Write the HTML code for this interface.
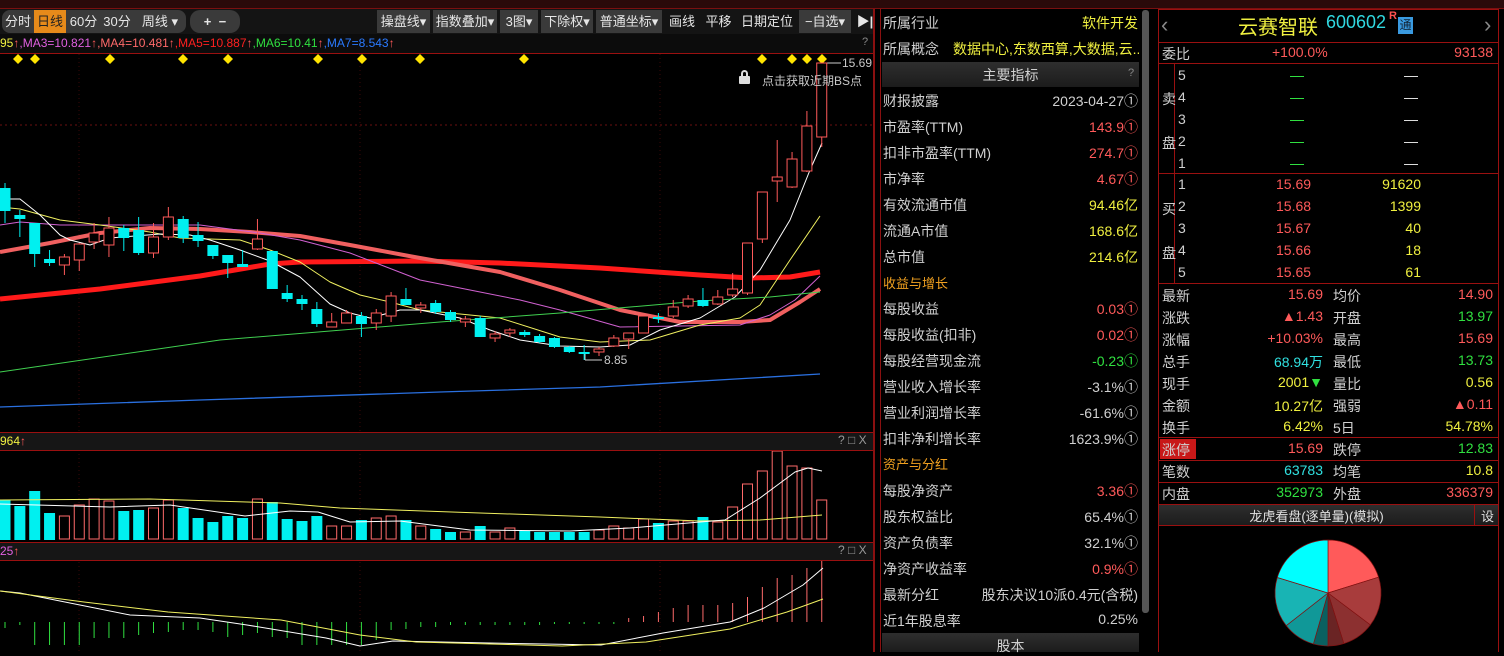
<!DOCTYPE html>
<html><head><meta charset="utf-8">
<style>
*{margin:0;padding:0;box-sizing:border-box}
body{width:1504px;height:652px;background:#000;overflow:hidden;position:relative;font-family:"Liberation Sans","Noto Sans CJK SC",sans-serif;color:#c8c8c8}
.a{position:absolute;white-space:nowrap}
.tb{position:absolute;top:10px;height:23px;line-height:23px;font-size:13px;color:#e6e6e6;text-align:center}
.g{background:#3a3a3a}
.ml{left:883px;font-size:14px;color:#d0d0d0}
.mv{right:366px;font-size:14px;text-align:right}
.rl{left:1162px;font-size:14px;color:#d0d0d0}
.r1{right:181px;font-size:14px;text-align:right}
.l2{left:1333px;font-size:14px;color:#d0d0d0}
.r2{right:11px;font-size:14px;text-align:right}
.red{color:#ff5a5a}.yel{color:#f0f040}.grn{color:#30e040}.cyn{color:#30e0e0}.wht{color:#d0d0d0}
.hl{position:absolute;height:1px;background:#9a1010}
</style></head><body>
<div class="a" style="left:0;top:0;width:1504px;height:8px;background:#2a0a0a"></div>
<div class="hl" style="left:0;top:8px;width:1504px;background:#7a1010"></div>
<!-- toolbar -->
<div class="a" style="left:0;top:9px;width:874px;height:25px;background:#141414"></div>
<div class="tb g" style="left:2px;width:184px;border-radius:8px"></div>
<div class="tb" style="left:3px;width:30px">分时</div>
<div class="tb" style="left:34px;width:32px;background:#e68a1a;color:#222">日线</div>
<div class="tb" style="left:68px;width:31px">60分</div>
<div class="tb" style="left:101px;width:32px">30分</div>
<div class="tb" style="left:135px;width:50px">周线 ▾</div>
<div class="tb g" style="left:190px;width:50px;border-radius:10px;font-weight:bold">+&nbsp;&nbsp;−</div>
<div class="tb g" style="left:377px;width:53px">操盘线▾</div>
<div class="tb g" style="left:433px;width:64px">指数叠加▾</div>
<div class="tb g" style="left:500px;width:38px">3图▾</div>
<div class="tb g" style="left:541px;width:52px">下除权▾</div>
<div class="tb g" style="left:596px;width:66px">普通坐标▾</div>
<div class="tb" style="left:666px;width:32px">画线</div>
<div class="tb" style="left:703px;width:31px">平移</div>
<div class="tb" style="left:740px;width:54px">日期定位</div>
<div class="tb g" style="left:799px;width:52px">−自选▾</div>
<div class="tb" style="left:856px;width:18px;font-weight:bold">▶|</div>
<div class="a" style="left:0;top:34px;width:874px;height:19px;background:#0c0c0c"></div>
<div class="a" style="left:0;top:36px;font-size:12px;line-height:15px"><span class="yel">95</span><span class="red">↑</span><span style="color:#e060e0">,MA3=10.821</span><span class="red">↑</span><span style="color:#ff6a6a">,MA4=10.481</span><span class="red">↑</span><span style="color:#ff2020">,MA5=10.887</span><span class="red">↑</span><span style="color:#30e040">,MA6=10.41</span><span class="red">↑</span><span style="color:#2a7aff">,MA7=8.543</span><span class="red">↑</span></div>
<div class="a" style="left:862px;top:36px;font-size:11px;color:#888">?</div>
<div class="hl" style="left:0;top:53px;width:874px"></div>
<svg class="a" style="left:0;top:0" width="874" height="652" id="ch"></svg>
<div class="a" style="left:842px;top:56px;font-size:12px;color:#c8c8c8">15.69</div>
<div class="a" style="left:762px;top:72px;font-size:12px;color:#c8c8c8">点击获取近期BS点</div>
<div class="a" style="left:739px;top:70px;width:11px;height:14px"><div style="position:absolute;left:2px;top:0;width:7px;height:8px;border:2px solid #ddd;border-radius:4px 4px 0 0"></div><div style="position:absolute;left:0;top:6px;width:11px;height:8px;background:#ddd;border-radius:1px"></div></div>
<div class="a" style="left:604px;top:353px;font-size:12px;color:#c8c8c8">8.85</div>
<!-- sub headers -->
<div class="a" style="left:0;top:432px;width:874px;height:19px;background:#161616;border-top:1px solid #9a1010;border-bottom:1px solid #9a1010"></div>
<div class="a" style="left:0;top:434px;font-size:12px"><span class="yel">964</span><span class="red">↑</span></div>
<div class="a" style="left:838px;top:433px;font-size:12px;color:#999">? □ X</div>
<div class="a" style="left:0;top:542px;width:874px;height:19px;background:#161616;border-top:1px solid #9a1010;border-bottom:1px solid #9a1010"></div>
<div class="a" style="left:0;top:544px;font-size:12px"><span style="color:#e060e0">25</span><span class="red">↑</span></div>
<div class="a" style="left:838px;top:543px;font-size:12px;color:#999">? □ X</div>
<div class="a" style="left:873px;top:9px;width:2px;height:643px;background:#8a1010"></div>
<!-- middle -->
<div class="a" style="left:880px;top:9px;width:1px;height:643px;background:#8a1010"></div>
<div class="a" style="left:1142px;top:10px;width:7px;height:603px;background:#555;border-radius:3px"></div>
<div class="a ml" style="top:13px">所属行业</div><div class="a mv yel" style="top:13px">软件开发</div>
<div class="a ml" style="top:39px">所属概念</div><div class="a yel" style="left:953px;top:39px;font-size:14px;width:186px;overflow:hidden">数据中心,东数西算,大数据,云...</div>
<div class="a" style="left:882px;top:62px;width:257px;height:25px;background:linear-gradient(#2e2e2e,#1c1c1c)"></div>
<div class="a" style="left:882px;top:65px;width:257px;text-align:center;font-size:14px;color:#d0d0d0">主要指标</div>
<div class="a" style="left:1128px;top:67px;font-size:11px;color:#888">?</div>
<div class="a ml" style="top:91px">财报披露</div><div class="a mv wht" style="top:91px">2023-04-27①</div>
<div class="a ml" style="top:117px">市盈率(TTM)</div><div class="a mv red" style="top:117px">143.9①</div>
<div class="a ml" style="top:143px">扣非市盈率(TTM)</div><div class="a mv red" style="top:143px">274.7①</div>
<div class="a ml" style="top:169px">市净率</div><div class="a mv red" style="top:169px">4.67①</div>
<div class="a ml" style="top:195px">有效流通市值</div><div class="a mv yel" style="top:195px">94.46亿</div>
<div class="a ml" style="top:221px">流通A市值</div><div class="a mv yel" style="top:221px">168.6亿</div>
<div class="a ml" style="top:247px">总市值</div><div class="a mv yel" style="top:247px">214.6亿</div>
<div class="a ml" style="top:273px;font-size:13px;color:#f0a020">收益与增长</div>
<div class="a ml" style="top:299px">每股收益</div><div class="a mv red" style="top:299px">0.03①</div>
<div class="a ml" style="top:325px">每股收益(扣非)</div><div class="a mv red" style="top:325px">0.02①</div>
<div class="a ml" style="top:351px">每股经营现金流</div><div class="a mv grn" style="top:351px">-0.23①</div>
<div class="a ml" style="top:377px">营业收入增长率</div><div class="a mv wht" style="top:377px">-3.1%①</div>
<div class="a ml" style="top:403px">营业利润增长率</div><div class="a mv wht" style="top:403px">-61.6%①</div>
<div class="a ml" style="top:429px">扣非净利增长率</div><div class="a mv wht" style="top:429px">1623.9%①</div>
<div class="a ml" style="top:454px;font-size:13px;color:#f0a020">资产与分红</div>
<div class="a ml" style="top:481px">每股净资产</div><div class="a mv red" style="top:481px">3.36①</div>
<div class="a ml" style="top:507px">股东权益比</div><div class="a mv wht" style="top:507px">65.4%①</div>
<div class="a ml" style="top:533px">资产负债率</div><div class="a mv wht" style="top:533px">32.1%①</div>
<div class="a ml" style="top:559px">净资产收益率</div><div class="a mv red" style="top:559px">0.9%①</div>
<div class="a ml" style="top:585px">最新分红</div><div class="a mv wht" style="top:585px">股东决议10派0.4元(含税)</div>
<div class="a ml" style="top:611px">近1年股息率</div><div class="a mv wht" style="top:611px">0.25%</div>
<div class="a" style="left:882px;top:633px;width:257px;height:19px;background:linear-gradient(#2e2e2e,#1c1c1c)"></div>
<div class="a" style="left:882px;top:636px;width:257px;text-align:center;font-size:14px;color:#d0d0d0">股本</div>
<!-- right -->
<div class="a" style="left:1158px;top:9px;width:341px;height:643px;border:1px solid #9a1010;border-bottom:none"></div>
<div class="a" style="left:1161px;top:12px;font-size:22px;color:#888">‹</div>
<div class="a" style="left:1484px;top:12px;font-size:22px;color:#888">›</div>
<div class="a" style="left:1238px;top:11px;font-size:20px;color:#f0f040">云赛智联</div>
<div class="a" style="left:1326px;top:12px;font-size:18px;color:#30d8e0">600602</div>
<div class="a" style="left:1389px;top:10px;font-size:11px;font-weight:bold;color:#ff5050">R</div>
<div class="a" style="left:1398px;top:17px;width:15px;height:17px;background:#3a9ae0;color:#123;font-size:12px;line-height:17px;text-align:center">通</div>
<div class="hl" style="left:1159px;top:42px;width:339px"></div>
<div class="a rl" style="top:44px">委比</div><div class="a red" style="left:1272px;top:44px;font-size:14px">+100.0%</div><div class="a r2 red" style="top:44px">93138</div>
<div class="hl" style="left:1159px;top:63px;width:339px"></div>
<div class="a" style="left:1174px;top:63px;width:1px;height:220px;background:#9a1010"></div>
<div class="a rl" style="top:89px">卖</div><div class="a rl" style="top:133px">盘</div>
<div class="a rl" style="top:199px">买</div><div class="a rl" style="top:243px">盘</div>
<div id="ob"></div>
<div class="hl" style="left:1159px;top:173px;width:339px"></div>
<div class="hl" style="left:1159px;top:283px;width:339px"></div>
<div class="a" style="left:1160px;top:439px;width:36px;height:20px;background:#c81818"></div>
<div id="qt"></div>
<div class="hl" style="left:1159px;top:437px;width:339px"></div>
<div class="hl" style="left:1159px;top:460px;width:339px"></div>
<div class="hl" style="left:1159px;top:482px;width:339px"></div>
<div class="a" style="left:1159px;top:504px;width:339px;height:22px;background:linear-gradient(#2e2e2e,#1c1c1c);border-top:1px solid #9a1010;border-bottom:1px solid #9a1010"></div>
<div class="a" style="left:1159px;top:506px;width:315px;text-align:center;font-size:13px;color:#e0e0e0">龙虎看盘(逐单量)(模拟)</div>
<div class="a" style="left:1474px;top:504px;width:1px;height:22px;background:#9a1010"></div>
<div class="a" style="left:1481px;top:506px;font-size:13px;color:#e0e0e0">设</div>
<svg class="a" style="left:1270px;top:535px" width="116" height="116" viewBox="-58 -58 116 116" id="pie"></svg>
<script>
var S='http://www.w3.org/2000/svg',ch=document.getElementById('ch'),h='';
function pl(p,c,w){h+='<polyline fill="none" stroke="'+c+'" stroke-width="'+w+'" stroke-linejoin="round" points="'+p+'"/>';}
// grid
h+='<line x1="0" y1="125" x2="873" y2="125" stroke="#6a1010" stroke-dasharray="2,3"/>';
[79,360,660].forEach(function(x){h+='<line x1="'+x+'" y1="54" x2="'+x+'" y2="652" stroke="#3a0808" stroke-dasharray="1,3"/>';});
// diamonds
[18,35,110,183,228,318,362,420,524,762,792,807,822].forEach(function(x){h+='<polygon points="'+x+',54 '+(x+5)+',59 '+x+',64 '+(x-5)+',59" fill="#ffe400"/>';});
h+='<line x1="822" y1="63" x2="841" y2="63" stroke="#ccc"/><line x1="585" y1="360" x2="602" y2="360" stroke="#ccc"/><line x1="585" y1="353" x2="585" y2="360" stroke="#ccc"/>';
// MAs
pl('0,299 100,289 200,276 270,264 300,262 420,261 500,263 600,268 700,275 750,278 790,277 820,272','#ff1a1a',5);
pl('0,252 50,243 100,233 150,228 200,229 250,232 300,236 350,245 420,258 500,272 560,290 620,310 680,322 740,322 770,320 800,302 820,289','#f06060',4);
pl('0,225 20,222 60,225 150,225 200,225 260,233 300,240 350,253 420,280 470,290 520,300 560,310 620,327 740,325 770,315 795,300 820,276','#d060d0',1);
pl('0,207 20,209 60,220 100,225 150,232 180,238 240,240 270,250 300,262 330,282 360,295 390,302 420,310 500,318 560,337 600,342 650,340 700,325 740,318 760,305 790,260 820,216','#f0f060',1);
pl('0,199 20,199 40,215 60,235 70,240 90,245 110,238 160,234 190,235 210,240 240,250 270,261 300,277 330,304 350,313 370,318 400,310 420,310 460,318 490,330 520,340 560,346 600,347 630,345 660,330 700,318 735,297 760,270 790,220 810,170 822,143','#ffffff',1);
pl('0,372 220,340 440,322 560,313 700,301 770,297 820,292','#40d050',1);
pl('0,407 200,400 440,392 600,387 820,374','#2a70e0',1.3);
// candles [o,c,h,l,red]
var C=[[188,211,183,223,0],[215,219,210,237,0],[223,254,223,267,0],[259,263,250,266,0],[265,257,254,275,1],[260,244,243,271,1],[242,233,223,249,1],[245,228,217,257,1],[228,238,225,251,0],[230,253,217,255,0],[253,237,223,258,1],[237,217,207,240,1],[219,238,216,243,0],[235,241,222,247,0],[245,256,245,259,0],[255,263,255,278,0],[264,267,250,267,0],[249,239,219,250,1],[251,289,251,289,0],[293,299,285,302,0],[299,304,295,310,0],[309,324,302,327,0],[327,322,313,327,1],[323,313,310,323,1],[316,324,312,337,0],[323,313,309,330,1],[316,296,292,322,1],[299,305,288,305,0],[308,305,302,313,1],[303,312,300,314,0],[312,320,310,322,0],[322,319,316,327,1],[318,337,316,337,0],[338,334,331,342,1],[333,330,328,337,1],[332,335,330,337,0],[336,342,334,343,0],[338,347,337,348,0],[347,352,346,353,0],[352,354,345,360,0],[352,349,347,356,1],[346,338,335,347,1],[339,333,333,349,1],[333,316,316,333,1],[317,318,313,323,0],[316,307,300,318,1],[306,299,295,308,1],[300,306,288,307,0],[304,297,290,305,1],[295,289,273,297,1],[293,243,243,295,1],[239,192,192,243,1],[181,177,140,202,1],[187,159,152,188,1],[171,126,111,172,1],[137,63,63,147,1]];
C.forEach(function(k,i){var x=5+14.85*i,col=k[4]?'#ff5a5a':'#00f0f0',t=Math.min(k[0],k[1]),b=Math.max(k[0],k[1]);
h+='<line x1="'+x+'" y1="'+k[2]+'" x2="'+x+'" y2="'+k[3]+'" stroke="'+col+'"/>';
if(k[4])h+='<rect x="'+(x-5)+'" y="'+t+'" width="10" height="'+Math.max(b-t,1)+'" fill="#000" stroke="'+col+'"/>';
else h+='<rect x="'+(x-5.5)+'" y="'+t+'" width="11" height="'+Math.max(b-t,2)+'" fill="'+col+'"/>';});
// volume
var V=[500,506,491,513,516,505,499,501,511,510,508,500,508,518,522,516,518,499,502,519,521,516,526,526,520,518,516,520,526,529,532,532,526,532,528,531,532,532,532,532,530,526,528,519,523,521,521,517,522,507,484,471,451,466,468,500];
V.forEach(function(y,i){var x=5+14.85*i,r=C[i][4];
if(r)h+='<rect x="'+(x-5)+'" y="'+y+'" width="10" height="'+(539-y)+'" fill="#000" stroke="#ff6a6a"/>';
else h+='<rect x="'+(x-5.5)+'" y="'+y+'" width="11" height="'+(540-y)+'" fill="#00f0f0"/>';});
pl('0,500 150,499 280,503 340,508 480,513 600,517 700,521 760,520 822,515','#f0f060',1);
pl('0,504 110,507 170,505 245,516 290,511 318,512 350,522 400,521 470,530 570,531 630,528 700,522 725,520 760,498 795,472 808,468 822,471','#fff',1);
// macd
var G=[628,625,645,645,645,645,638,638,638,635,633,632,630,630,632,637,635,633,637,638,645,645,645,645,645,640,630,629,627,627,625,625,625,625,625,625,625,624,624,624,624,624];
G.forEach(function(y,i){var x=5+14.85*i;h+='<line x1="'+x+'" y1="622" x2="'+x+'" y2="'+y+'" stroke="#30e040"/>';});
var R=[618,616,612,608,605,605,605,603,597,587,578,575,568,560];
R.forEach(function(y,i){var x=5+14.85*(42+i);h+='<line x1="'+x+'" y1="622" x2="'+x+'" y2="'+y+'" stroke="#ff6a6a"/>';});
pl('0,591 20,593 130,615 200,618 247,625 326,638 360,646 393,641 489,643 601,645 663,633 730,622 764,608 803,585 823,568','#fff',1);
pl('0,591 84,602 168,612 281,620 360,635 416,642 562,646 646,642 730,629 787,612 823,599','#f0f060',1);
ch.innerHTML=h;
// order book
var o='',sy=[76,98,120,142,164];
sy.forEach(function(y,i){o+='<div class="a" style="left:1178px;top:'+(y-9)+'px;font-size:14px;color:#d0d0d0">'+(5-i)+'</div><div class="a" style="left:1290px;top:'+y+'px;width:14px;height:1px;background:#30e040"></div><div class="a" style="left:1404px;top:'+y+'px;width:14px;height:1px;background:#ddd"></div>';});
var B=[['15.69','91620'],['15.68','1399'],['15.67','40'],['15.66','18'],['15.65','61']];
B.forEach(function(b,i){var y=176+22*i;o+='<div class="a" style="left:1178px;top:'+y+'px;font-size:14px;color:#d0d0d0">'+(i+1)+'</div><div class="a red" style="left:1276px;top:'+y+'px;font-size:14px">'+b[0]+'</div><div class="a yel" style="right:83px;top:'+y+'px;font-size:14px;text-align:right">'+b[1]+'</div>';});
document.getElementById('ob').innerHTML=o;
var Q=[['最新','15.69','red','均价','14.90','red'],['涨跌','▲1.43','red','开盘','13.97','grn'],['涨幅','+10.03%','red','最高','15.69','red'],['总手','68.94万','cyn','最低','13.73','grn'],['现手','2001<span class="grn">▼</span>','yel','量比','0.56','yel'],['金额','10.27亿','yel','强弱','▲0.11','red'],['换手','6.42%','yel','5日','54.78%','yel'],['涨停','15.69','red','跌停','12.83','grn'],['笔数','63783','cyn','均笔','10.8','yel'],['内盘','352973','grn','外盘','336379','red']];
var ys=[286,308,330,352,374,396,418,440,462,484],q='';
Q.forEach(function(r,i){var y=ys[i];q+='<div class="a rl" style="top:'+y+'px">'+r[0]+'</div><div class="a r1 '+r[2]+'" style="top:'+y+'px">'+r[1]+'</div><div class="a l2" style="top:'+y+'px">'+r[3]+'</div><div class="a r2 '+r[5]+'" style="top:'+y+'px">'+r[4]+'</div>';});
document.getElementById('qt').innerHTML=q;
// pie
var P=[[0,72.6,'#ff5a5a'],[72.6,127,'#a83c3c'],[127,162.6,'#8c3030'],[162.6,180,'#6a2424'],[180,196,'#0a6060'],[196,232,'#109898'],[232,287,'#18b4b4'],[287,360,'#00ffff']],p='',r=53;
P.forEach(function(s){var a1=s[0]*Math.PI/180,a2=s[1]*Math.PI/180;p+='<path d="M0,0 L'+(r*Math.sin(a1)).toFixed(2)+','+(-r*Math.cos(a1)).toFixed(2)+' A'+r+','+r+' 0 '+(s[1]-s[0]>180?1:0)+',1 '+(r*Math.sin(a2)).toFixed(2)+','+(-r*Math.cos(a2)).toFixed(2)+' Z" fill="'+s[2]+'" stroke="#801010" stroke-width="0.7"/>';});
document.getElementById('pie').innerHTML=p;
</script>
</body></html>
